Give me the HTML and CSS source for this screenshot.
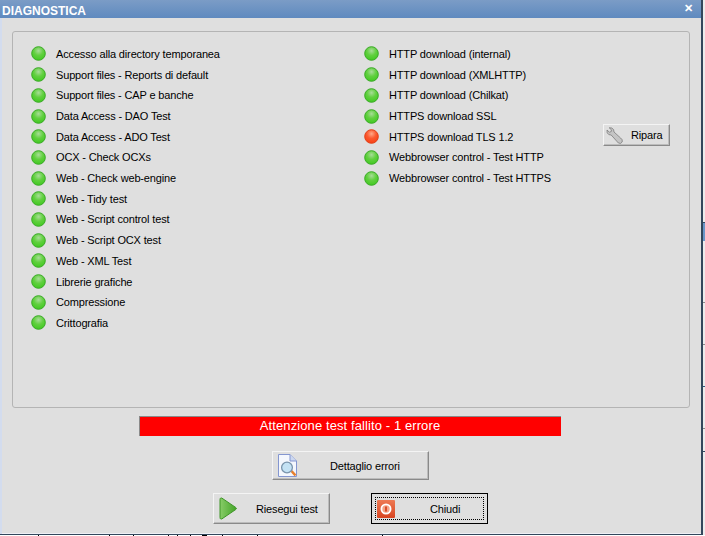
FILE: index.html
```html
<!DOCTYPE html>
<html lang="it">
<head>
<meta charset="utf-8">
<title>Diagnostica</title>
<link rel="stylesheet" href="styles.css">
</head>
<body>
<svg class="defs" width="0" height="0" aria-hidden="true">
  <defs>
    <radialGradient id="g" cx="0.5" cy="0.3" r="0.75"><stop offset="0" stop-color="#a8dc98"/><stop offset="0.45" stop-color="#62d040"/><stop offset="1" stop-color="#3cc81c"/></radialGradient>
    <radialGradient id="r" cx="0.5" cy="0.3" r="0.75"><stop offset="0" stop-color="#ffa888"/><stop offset="0.45" stop-color="#fb5a30"/><stop offset="1" stop-color="#f83c10"/></radialGradient>
    <linearGradient id="pl" x1="0" y1="0" x2="1" y2="0"><stop offset="0" stop-color="#88cc68"/><stop offset="1" stop-color="#44a428"/></linearGradient>
    <linearGradient id="pw" x1="0" y1="0" x2="0" y2="1"><stop offset="0" stop-color="#ee7a54"/><stop offset="1" stop-color="#d84420"/></linearGradient>
    <symbol id="led-g" viewBox="0 0 15 15"><circle cx="7.5" cy="7.5" r="6.8" fill="url(#g)" stroke="#3aaa26"/></symbol>
    <symbol id="led-r" viewBox="0 0 15 15"><circle cx="7.5" cy="7.5" r="6.8" fill="url(#r)" stroke="#e04018"/></symbol>
  </defs>
</svg>
<div class="screen">
  <div class="top">
    <main class="window">
      <header class="titlebar">
        <span class="title">DIAGNOSTICA</span>
        <span class="close">✕</span>
      </header>
      <section class="panel">
        <div class="col col-left">
          <div class="row"><svg class="led"><use href="#led-g"/></svg><span>Accesso alla directory temporanea</span></div>
          <div class="row"><svg class="led"><use href="#led-g"/></svg><span>Support files - Reports di default</span></div>
          <div class="row"><svg class="led"><use href="#led-g"/></svg><span>Support files - CAP e banche</span></div>
          <div class="row"><svg class="led"><use href="#led-g"/></svg><span>Data Access - DAO Test</span></div>
          <div class="row"><svg class="led"><use href="#led-g"/></svg><span>Data Access - ADO Test</span></div>
          <div class="row"><svg class="led"><use href="#led-g"/></svg><span>OCX - Check OCXs</span></div>
          <div class="row"><svg class="led"><use href="#led-g"/></svg><span>Web - Check web-engine</span></div>
          <div class="row"><svg class="led"><use href="#led-g"/></svg><span>Web - Tidy test</span></div>
          <div class="row"><svg class="led"><use href="#led-g"/></svg><span>Web - Script control test</span></div>
          <div class="row"><svg class="led"><use href="#led-g"/></svg><span>Web - Script OCX test</span></div>
          <div class="row"><svg class="led"><use href="#led-g"/></svg><span>Web - XML Test</span></div>
          <div class="row"><svg class="led"><use href="#led-g"/></svg><span>Librerie grafiche</span></div>
          <div class="row"><svg class="led"><use href="#led-g"/></svg><span>Compressione</span></div>
          <div class="row"><svg class="led"><use href="#led-g"/></svg><span>Crittografia</span></div>
        </div>
        <div class="col col-right">
          <div class="row"><svg class="led"><use href="#led-g"/></svg><span>HTTP download (internal)</span></div>
          <div class="row"><svg class="led"><use href="#led-g"/></svg><span>HTTP download (XMLHTTP)</span></div>
          <div class="row"><svg class="led"><use href="#led-g"/></svg><span>HTTP download (Chilkat)</span></div>
          <div class="row"><svg class="led"><use href="#led-g"/></svg><span>HTTPS download SSL</span></div>
          <div class="row"><svg class="led"><use href="#led-r"/></svg><span>HTTPS download TLS 1.2</span></div>
          <div class="row"><svg class="led"><use href="#led-g"/></svg><span>Webbrowser control - Test HTTP</span></div>
          <div class="row"><svg class="led"><use href="#led-g"/></svg><span>Webbrowser control - Test HTTPS</span></div>
        </div>
        <button class="btn btn-repair" type="button">
          <svg class="ico-wrench" viewBox="0 0 17 17"><path d="M1 3 3.4 5.2 5.2 4.6 5.4 2.8 3.2 .8 5.8 1 7.6 2.6 8 5 14.6 11 16.2 12.8 16.2 15 14.6 16.4 12.4 16 5.2 8 2.8 7.6 1.2 5.8Z" fill="#c4c4c4" stroke="#7c7c7c" stroke-width=".8"/></svg>
          <span>Ripara</span>
        </button>
      </section>
      <div class="alert">Attenzione test fallito - 1 errore</div>
      <div class="actions-mid">
        <button class="btn btn-detail" type="button">
          <svg class="ico-doc" viewBox="0 0 19 23"><path d="M.5.5H12L18.5 7V22.5H.5Z" fill="#f4f7fd" stroke="#8496d0"/><path d="M12 .5V7H18.5" fill="#ccd8f0" stroke="#8496d0"/><path d="M13.5 17 17.5 21.5" stroke="#e8802c" stroke-width="2.6"/><circle cx="9" cy="13.5" r="5.4" fill="#c4e2f4" stroke="#7a94ac" stroke-width="1.3"/></svg>
          <span>Dettaglio errori</span>
        </button>
      </div>
      <div class="actions-bottom">
        <button class="btn btn-run" type="button">
          <svg class="ico-play" viewBox="0 0 18 23"><path d="M1 2.5C1 1 2 .6 3 1.2L16.6 10.4C17.6 11.1 17.6 11.9 16.6 12.6L3 21.8C2 22.4 1 22 1 20.5Z" fill="url(#pl)" stroke="#3c9424"/></svg>
          <span>Riesegui test</span>
        </button>
        <button class="btn btn-close" type="button">
          <span class="focus">
            <svg class="ico-power" viewBox="0 0 18 18"><rect width="18" height="18" rx="1" fill="url(#pw)"/><circle cx="9" cy="9" r="4.6" fill="#f4a488" stroke="#fff" stroke-width="1.8"/><path d="M9 6.4V11.6" stroke="#d84420" stroke-width="1.8"/></svg>
            <span>Chiudi</span>
          </span>
        </button>
      </div>
    </main>
    <aside class="strip" aria-hidden="true">
      <div class="cell cell-empty"></div>
      <div class="cell cell-blue"></div>
      <div class="cell cell-grey"></div>
      <div class="cell cell-a"></div>
      <div class="cell cell-b"></div>
      <div class="cell cell-a"></div>
      <div class="cell cell-c"></div>
    </aside>
  </div>
  <div class="bottom-edge"></div>
</div>
</body>
</html>
```
FILE: styles.css
```css
* { box-sizing: border-box; }
html, body { margin: 0; padding: 0; }
body { width: 705px; height: 536px; overflow: hidden; background: #fff; font-family: "Liberation Sans", sans-serif; font-size: 11px; letter-spacing: -0.15px; color: #000; }
.defs { position: absolute; }
.screen { display: flex; flex-direction: column; width: 705px; height: 536px; }
.top { display: flex; height: 535px; }
.window { width: 703px; height: 535px; background: #dfdfdf; border-right: 2px solid #33475c; border-bottom: 1px solid #33475c; box-shadow: inset 2px 0 0 #d3dcee, inset 0 -1px 0 #eef0f6; display: flex; flex-direction: column; align-items: stretch; }
.titlebar { height: 18px; background: linear-gradient(#7b9cc6, #5f8abf); display: flex; align-items: center; justify-content: space-between; padding: 3px 8px 0 2px; color: #fff; font-family: "Liberation Sans", sans-serif; font-weight: 700; font-size: 12px; letter-spacing: 0; }
.close { font-size: 11px; margin-top: -4px; }
.panel { position: relative; display: flex; margin: 13px 11px 0 12px; height: 377px; border: 1px solid #b4b4b4; border-radius: 3px; padding: 11.6px 0 0 18px; }
.col { display: flex; flex-direction: column; }
.col-left { width: 333px; }
.row { display: flex; align-items: center; height: 20.7px; gap: 10px; white-space: nowrap; }
.led { width: 15px; height: 15px; flex: none; }
.btn { font: inherit; letter-spacing: inherit; color: #000; background: #dfdfdf; border: 1px solid; border-color: #f4f4f4 #8a8a8a #8a8a8a #f4f4f4; box-shadow: inset -1px -1px 0 #bcbcbc; padding: 0; display: flex; align-items: center; position: relative; }
.btn-repair { position: absolute; left: 590px; top: 92px; width: 67px; height: 22px; padding-left: 2px; }
.ico-wrench { width: 17px; height: 17px; margin-right: 8px; }
.alert { margin: 8px 0 0 139px; width: 422px; height: 20px; background: #f00; color: #fff; text-align: center; line-height: 19px; font-size: 13px; letter-spacing: 0.1px; box-shadow: inset 1px 1px 0 #8a8a8a; }
.actions-mid { display: flex; margin: 15px 0 0 272px; }
.btn-detail { width: 157px; height: 29px; padding-left: 5px; }
.ico-doc { width: 19px; height: 23px; margin-right: 33px; }
.actions-bottom { display: flex; margin: 13px 0 0 213px; gap: 41px; }
.btn-run { width: 117px; height: 31px; padding-left: 5px; }
.ico-play { width: 18px; height: 23px; margin-right: 19px; }
.btn-close { width: 117px; height: 31px; border: 1px solid #000; box-shadow: none; padding: 3px; }
.focus { display: flex; align-items: center; width: 100%; height: 100%; border: 1px dotted #000; padding-left: 1px; }
.ico-power { width: 18px; height: 18px; margin-right: 35px; }
.strip { width: 2px; height: 535px; background: #ececec; display: flex; flex-direction: column; }
.cell { flex: none; }
.cell-empty { height: 222px; }
.cell-blue { height: 19px; background: #6a96c8; border-top: 1px solid #33475c; }
.cell-grey { height: 62px; border-bottom: 1px solid #8a8a8a; }
.cell-a { height: 42px; border-bottom: 1px solid #8a8a8a; }
.cell-b { height: 42px; border-bottom: 1px solid #2c5a80; }
.cell-c { height: 23px; border-bottom: 1px solid #33475c; }
.bottom-edge { height: 1px; background:
  linear-gradient(#000, #000) 38px 0 / 1px 1px no-repeat,
  linear-gradient(#000, #000) 109px 0 / 1px 1px no-repeat,
  linear-gradient(#000, #000) 133px 0 / 1px 1px no-repeat,
  linear-gradient(#000, #000) 168px 0 / 1px 1px no-repeat,
  linear-gradient(#000, #000) 177px 0 / 1px 1px no-repeat,
  linear-gradient(#000, #000) 190px 0 / 1px 1px no-repeat,
  linear-gradient(#000, #000) 202px 0 / 5px 1px no-repeat,
  linear-gradient(#000, #000) 222px 0 / 1px 1px no-repeat,
  linear-gradient(#000, #000) 257px 0 / 1px 1px no-repeat,
  linear-gradient(#000, #000) 382px 0 / 1px 1px no-repeat,
  #fff; }
```
